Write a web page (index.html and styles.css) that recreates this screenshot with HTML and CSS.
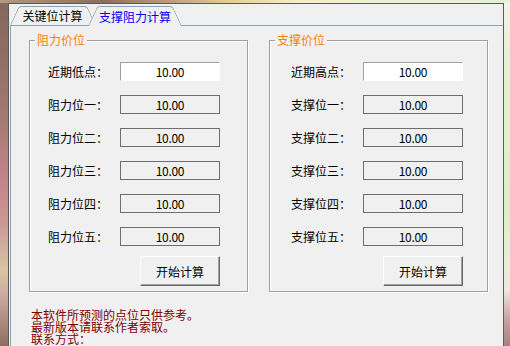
FILE: index.html
```html
<!DOCTYPE html>
<html lang="zh-CN">
<head>
<meta charset="utf-8">
<title>支撑阻力计算</title>
<link rel="stylesheet" href="styles.css">
</head>
<body>
<div class="window">
  <div class="tabs">
    <div class="tab tab-first">关键位计算</div>
    <div class="tab tab-active">支撑阻力计算</div>
  </div>
  <div class="pane">
    <div class="groups">
      <div class="group group-left">
        <span class="group-title">阻力价位</span>
        <div class="fields">
          <span class="label">近期低点：</span><div class="field field-edit">10.00</div>
          <span class="label">阻力位一：</span><div class="field">10.00</div>
          <span class="label">阻力位二：</span><div class="field">10.00</div>
          <span class="label">阻力位三：</span><div class="field">10.00</div>
          <span class="label">阻力位四：</span><div class="field">10.00</div>
          <span class="label">阻力位五：</span><div class="field">10.00</div>
        </div>
        <div class="actions"><button class="btn" type="button">开始计算</button></div>
      </div>
      <div class="group group-right">
        <span class="group-title">支撑价位</span>
        <div class="fields">
          <span class="label">近期高点：</span><div class="field field-edit">10.00</div>
          <span class="label">支撑位一：</span><div class="field">10.00</div>
          <span class="label">支撑位二：</span><div class="field">10.00</div>
          <span class="label">支撑位三：</span><div class="field">10.00</div>
          <span class="label">支撑位四：</span><div class="field">10.00</div>
          <span class="label">支撑位五：</span><div class="field">10.00</div>
        </div>
        <div class="actions"><button class="btn" type="button">开始计算</button></div>
      </div>
    </div>
    <div class="notes">
      <div>本软件所预测的点位只供参考。</div>
      <div>最新版本请联系作者索取。</div>
      <div>联系方式：</div>
    </div>
  </div>
</div>
</body>
</html>
```
FILE: styles.css
```css
html, body {
  margin: 0;
  height: 100%;
  overflow: hidden;
}
body {
  font-family: "Noto Sans CJK SC", "Liberation Sans", sans-serif;
  font-size: 12px;
  line-height: 12px;
  color: #000;
  background:
    linear-gradient(to right, #b49a80 0%, #8c6e5e 20%, #b89a78 32%, #e6cf94 45%, #f6eec0 58%, #eef2d8 75%, #e4f2d6 100%) top left / 100% 3px no-repeat,
    linear-gradient(to bottom, #84685a 0%, #8e6e62 15%, #a47a74 35%, #c8868e 55%, #c99a94 65%, #dac4a2 78%, #c8a8a0 86%, #8e6e5c 100%) top left / 8px 100% no-repeat,
    linear-gradient(to bottom, #f0f4e6 0%, #e2f2d2 20%, #dcefc8 60%, #e6f0d6 78%, #efe6de 84%, #c8a4a4 92%, #a88080 100%) top right / 6px 100% no-repeat,
    #e0d8c8;
}
.window {
  box-sizing: border-box;
  margin: 3px 6px 0 8px;
  height: calc(100% - 3px);
  border: 1px solid #5a5a5a;
  border-bottom: 0;
  background: #f0f0f0;
  padding: 2px 0 0 1px;
  display: flex;
  flex-direction: column;
}
.tabs {
  display: flex;
  align-items: flex-start;
  height: 19px;
}
.tab {
  position: relative;
  z-index: 1;
  box-sizing: border-box;
  height: 19px;
  padding-top: 1px;
  display: flex;
  align-items: center;
  justify-content: center;
  white-space: nowrap;
}
.tab::before,
.tab::after {
  content: "";
  position: absolute;
  top: 0;
  bottom: 0;
  z-index: -1;
  background: #f0f0f0;
  border-top: 1px solid #8ea2b2;
  transform-origin: bottom;
}
.tab::before {
  left: 0;
  right: 50%;
  border-left: 1px solid #8ea2b2;
  border-top-left-radius: 3px;
  transform-origin: bottom left;
  transform: skewX(-25deg);
}
.tab::after {
  left: 50%;
  right: 0;
  border-right: 1px solid #8ea2b2;
  border-top-right-radius: 3px;
  transform-origin: bottom right;
  transform: skewX(25deg);
}
.tab-first {
  width: 85px;
}
.tab-active {
  width: 94px;
  height: 20px;
  margin-left: -7px;
  z-index: 2;
  color: #0000ff;
}
.pane {
  flex: 1;
  border-top: 1px solid #8ea2b2;
  border-left: 1px solid #8ea2b2;
  padding: 14px 0 0 18px;
}
.groups {
  display: flex;
  column-gap: 21px;
}
.group {
  position: relative;
  box-sizing: border-box;
  width: 219px;
  height: 252px;
  border: 1px solid #a0a0a0;
  box-shadow: inset 1px 1px 0 #fff, 1px 1px 0 #fff;
  padding: 21px 0 0 18px;
}
.group-right {
  padding-left: 21px;
}
.group-title {
  position: absolute;
  top: -7px;
  left: 5px;
  padding: 0 2px;
  background: #f0f0f0;
  color: #ff8000;
  line-height: 12px;
  white-space: nowrap;
}
.fields {
  display: grid;
  grid-template-columns: 72px 100px;
  grid-auto-rows: 19px;
  row-gap: 14px;
  align-items: center;
}
.label {
  white-space: nowrap;
}
.field {
  box-sizing: border-box;
  height: 19px;
  border: 1px solid #6e6e6e;
  background: #f0f0f0;
  text-align: center;
  line-height: 17px;
  letter-spacing: -0.3px;
}
.field-edit {
  background: #fff;
  border-color: #a0a0a0 #fff #fff #a0a0a0;
}
.actions {
  width: 172px;
  display: flex;
  justify-content: flex-end;
  margin-top: 10px;
}
.btn {
  box-sizing: border-box;
  width: 80px;
  height: 30px;
  margin: 0;
  padding: 1px 0 0;
  font: inherit;
  line-height: 12px;
  color: #000;
  background: #f0f0f0;
  border-style: solid;
  border-width: 1px;
  border-color: #fff #696969 #696969 #fff;
  box-shadow: inset -1px -1px 0 #a0a0a0;
}
.notes {
  margin-top: 17px;
  padding-left: 2px;
  color: #800000;
  line-height: 12px;
}
```
